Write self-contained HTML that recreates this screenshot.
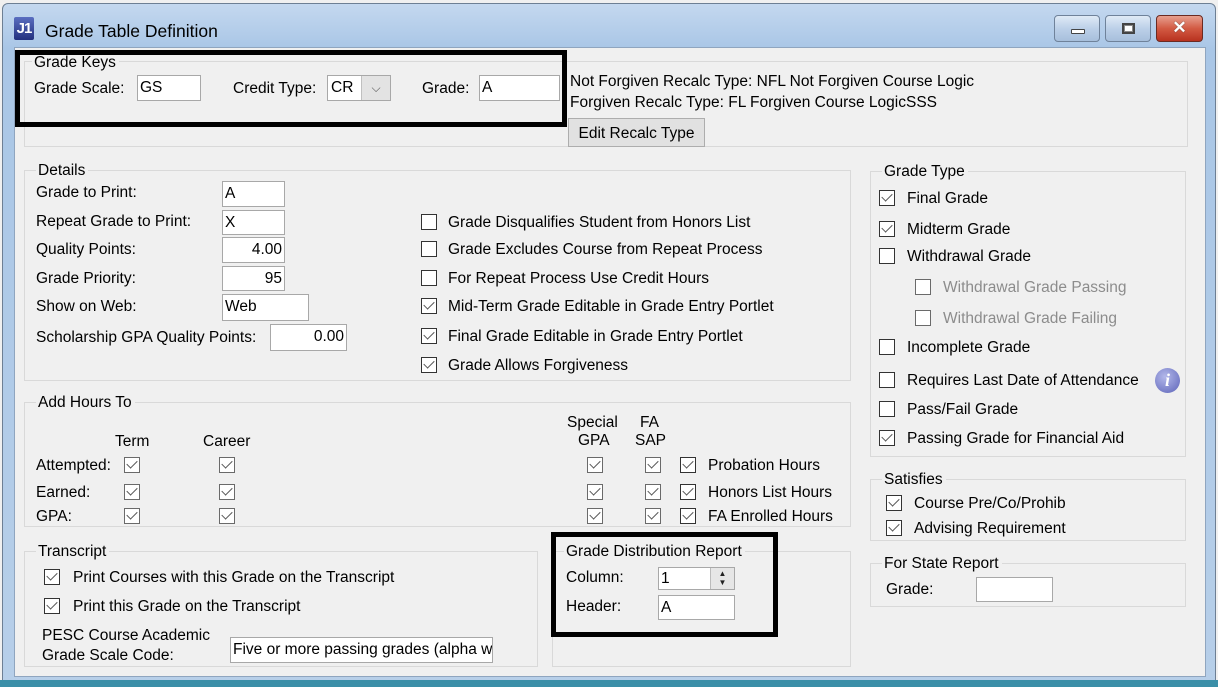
<!DOCTYPE html>
<html><head><meta charset="utf-8"><style>
*{box-sizing:border-box;margin:0;padding:0}
body{width:1218px;height:687px;overflow:hidden;background:#fff;font-family:"Liberation Sans",sans-serif;font-size:15.5px;color:#000;position:relative}
.a{position:absolute}
.t{position:absolute;line-height:16px;white-space:nowrap;margin-top:1px}
.g{position:absolute;border:1px solid #d9d9d9}
.lg{position:absolute;background:#f0f0f0;padding:0 3px 0 2px;line-height:16px;white-space:nowrap;margin-top:1px}
.in{position:absolute;background:#fff;border:1px solid #a8a8a8;line-height:24px;padding:0 2px;white-space:nowrap;overflow:hidden}
.r{text-align:right}
.cb{position:absolute;width:16px;height:16px;border:1.5px solid #333;background:#fff}
.cb.c::after{content:"";position:absolute;left:4px;top:0px;width:5px;height:9px;border:solid #555;border-width:0 1.6px 1.6px 0;transform:rotate(45deg)}
.gr{color:#8c8c8c}
.cb.d{border-color:#6a6a6a}
.bk{position:absolute;border:5px solid #000}
</style></head><body>
<div class="a" style="left:0;top:0;width:1218px;height:687px;background:#f0f0f0"></div>
<div class="a" style="left:2px;top:3px;width:1214px;height:684px;background:linear-gradient(#c4d8ef,#a9c6e6 45px,#b7cfe9);border:1px solid #6d7f94;border-radius:6px 6px 0 0"></div>
<div class="a" style="left:14px;top:47px;width:1192px;height:630px;background:#f0f0f0;border:1px solid #8fa5bf"></div>
<div class="a" style="left:0;top:680px;width:1218px;height:7px;background:#3b8fa8"></div>
<div class="a" style="left:14px;top:17px;width:20px;height:23px;background:linear-gradient(#5a6ec0,#23307e);border-radius:2px;color:#fff;font-weight:bold;font-size:15px;line-height:23px;text-align:center;letter-spacing:-1px">J1</div>
<div class="t" style="left:45px;top:21px;font-size:17.5px;line-height:18px">Grade Table Definition</div>
<div class="a" style="left:1054px;top:15px;width:46px;height:27px;border:1px solid #6f829a;border-radius:4px;background:linear-gradient(#dfeaf6,#bcd0e8 50%,#a7bfdc)"><div class="a" style="left:16px;top:13px;width:14px;height:5px;background:#fff;border:1px solid #444;border-radius:1px"></div></div>
<div class="a" style="left:1105px;top:15px;width:46px;height:27px;border:1px solid #6f829a;border-radius:4px;background:linear-gradient(#dfeaf6,#bcd0e8 50%,#a7bfdc)"><div class="a" style="left:16px;top:7px;width:13px;height:11px;border:2px solid #444;background:#fff;box-shadow:inset 0 0 0 1px #888"></div></div>
<div class="a" style="left:1156px;top:15px;width:47px;height:27px;border:1px solid #6b2a22;border-radius:4px;background:linear-gradient(#e8a08f,#d25a43 50%,#b8321f)"><div class="a" style="left:0;top:1px;width:45px;text-align:center;color:#fff;font-weight:bold;font-size:17px;line-height:22px;text-shadow:0 0 1px #333">✕</div></div>

<div class="g" style="left:24px;top:61px;width:1164px;height:86px"></div>
<div class="lg" style="left:32px;top:54px">Grade Keys</div>
<div class="t" style="left:34px;top:80px">Grade Scale:</div>
<div class="in" style="left:137px;top:75px;width:64px;height:26px">GS</div>
<div class="t" style="left:233px;top:80px">Credit Type:</div>
<div class="in" style="left:327px;top:75px;width:64px;height:26px;padding-left:3px">CR</div>
<div class="a" style="left:361px;top:76px;width:29px;height:24px;background:#e3e3e3;border-left:1px solid #c0c0c0;color:#555;text-align:center;line-height:24px;font-size:12px">&#x2335;</div>
<div class="t" style="left:422px;top:80px">Grade:</div>
<div class="in" style="left:479px;top:75px;width:81px;height:26px">A</div>
<div class="t" style="left:570px;top:73px">Not Forgiven Recalc Type: NFL Not Forgiven Course Logic</div>
<div class="t" style="left:570px;top:94px">Forgiven Recalc Type: FL Forgiven Course LogicSSS</div>
<div class="a" style="left:568px;top:118px;width:137px;height:29px;border:1px solid #adadad;background:#e1e1e1;text-align:center;line-height:29px">Edit Recalc Type</div>
<div class="bk" style="left:15px;top:50px;width:552px;height:77px"></div>

<div class="g" style="left:24px;top:170px;width:827px;height:211px"></div>
<div class="lg" style="left:36px;top:162px">Details</div>
<div class="t" style="left:36px;top:184px">Grade to Print:</div>
<div class="t" style="left:36px;top:213px">Repeat Grade to Print:</div>
<div class="t" style="left:36px;top:241px">Quality Points:</div>
<div class="t" style="left:36px;top:270px">Grade Priority:</div>
<div class="t" style="left:36px;top:298px">Show on Web:</div>
<div class="t" style="left:36px;top:329px">Scholarship GPA Quality Points:</div>
<div class="in" style="left:222px;top:181px;width:63px;height:26px">A</div>
<div class="in" style="left:222px;top:210px;width:63px;height:25px">X</div>
<div class="in r" style="left:222px;top:237px;width:63px;height:26px">4.00</div>
<div class="in r" style="left:222px;top:266px;width:63px;height:25px">95</div>
<div class="in" style="left:222px;top:294px;width:87px;height:27px">Web</div>
<div class="in r" style="left:270px;top:324px;width:77px;height:27px">0.00</div>
<div class="cb" style="left:421px;top:214px"></div><div class="t" style="left:448px;top:214px">Grade Disqualifies Student from Honors List</div>
<div class="cb" style="left:421px;top:241px"></div><div class="t" style="left:448px;top:241px">Grade Excludes Course from Repeat Process</div>
<div class="cb" style="left:421px;top:270px"></div><div class="t" style="left:448px;top:270px">For Repeat Process Use Credit Hours</div>
<div class="cb c" style="left:421px;top:298px"></div><div class="t" style="left:448px;top:298px">Mid-Term Grade Editable in Grade Entry Portlet</div>
<div class="cb c" style="left:421px;top:328px"></div><div class="t" style="left:448px;top:328px">Final Grade Editable in Grade Entry Portlet</div>
<div class="cb c" style="left:421px;top:357px"></div><div class="t" style="left:448px;top:357px">Grade Allows Forgiveness</div>

<div class="g" style="left:870px;top:171px;width:316px;height:286px"></div>
<div class="lg" style="left:882px;top:163px">Grade Type</div>
<div class="cb c" style="left:879px;top:190px"></div><div class="t" style="left:907px;top:190px">Final Grade</div>
<div class="cb c" style="left:879px;top:221px"></div><div class="t" style="left:907px;top:221px">Midterm Grade</div>
<div class="cb" style="left:879px;top:248px"></div><div class="t" style="left:907px;top:248px">Withdrawal Grade</div>
<div class="cb d" style="left:915px;top:279px"></div><div class="t gr" style="left:943px;top:279px">Withdrawal Grade Passing</div>
<div class="cb d" style="left:915px;top:310px"></div><div class="t gr" style="left:943px;top:310px">Withdrawal Grade Failing</div>
<div class="cb" style="left:879px;top:339px"></div><div class="t" style="left:907px;top:339px">Incomplete Grade</div>
<div class="cb" style="left:879px;top:372px"></div><div class="t" style="left:907px;top:372px">Requires Last Date of Attendance</div>
<div class="a" style="left:1155px;top:368px;width:25px;height:25px;border-radius:50%;background:radial-gradient(circle at 40% 35%,#b3b8ea,#5c63b8);color:#fff;font-weight:bold;font-style:italic;font-family:'Liberation Serif',serif;font-size:18px;line-height:25px;text-align:center">i</div>
<div class="cb" style="left:879px;top:401px"></div><div class="t" style="left:907px;top:401px">Pass/Fail Grade</div>
<div class="cb c" style="left:879px;top:430px"></div><div class="t" style="left:907px;top:430px">Passing Grade for Financial Aid</div>

<div class="g" style="left:24px;top:402px;width:827px;height:125px"></div>
<div class="lg" style="left:36px;top:394px">Add Hours To</div>
<div class="t" style="left:115px;top:433px">Term</div>
<div class="t" style="left:203px;top:433px">Career</div>
<div class="t" style="left:567px;top:414px">Special</div>
<div class="t" style="left:578px;top:432px">GPA</div>
<div class="t" style="left:640px;top:414px">FA</div>
<div class="t" style="left:635px;top:432px">SAP</div>
<div class="t" style="left:36px;top:457px">Attempted:</div>
<div class="t" style="left:36px;top:484px">Earned:</div>
<div class="t" style="left:36px;top:508px">GPA:</div>
<div class="cb c d" style="left:124px;top:457px"></div><div class="cb c d" style="left:219px;top:457px"></div><div class="cb c d" style="left:587px;top:457px"></div><div class="cb c d" style="left:645px;top:457px"></div><div class="cb c" style="left:680px;top:457px"></div>
<div class="cb c d" style="left:124px;top:484px"></div><div class="cb c d" style="left:219px;top:484px"></div><div class="cb c d" style="left:587px;top:484px"></div><div class="cb c d" style="left:645px;top:484px"></div><div class="cb c" style="left:680px;top:484px"></div>
<div class="cb c d" style="left:124px;top:508px"></div><div class="cb c d" style="left:219px;top:508px"></div><div class="cb c d" style="left:587px;top:508px"></div><div class="cb c d" style="left:645px;top:508px"></div><div class="cb c" style="left:680px;top:508px"></div>
<div class="t" style="left:708px;top:457px">Probation Hours</div>
<div class="t" style="left:708px;top:484px">Honors List Hours</div>
<div class="t" style="left:708px;top:508px">FA Enrolled Hours</div>

<div class="g" style="left:870px;top:479px;width:316px;height:62px"></div>
<div class="lg" style="left:882px;top:471px">Satisfies</div>
<div class="cb c" style="left:886px;top:495px"></div><div class="t" style="left:914px;top:495px">Course Pre/Co/Prohib</div>
<div class="cb c" style="left:886px;top:520px"></div><div class="t" style="left:914px;top:520px">Advising Requirement</div>

<div class="g" style="left:24px;top:551px;width:514px;height:116px"></div>
<div class="lg" style="left:36px;top:543px">Transcript</div>
<div class="cb c" style="left:44px;top:569px"></div><div class="t" style="left:73px;top:569px">Print Courses with this Grade on the Transcript</div>
<div class="cb c" style="left:44px;top:598px"></div><div class="t" style="left:73px;top:598px">Print this Grade on the Transcript</div>
<div class="t" style="left:42px;top:627px">PESC Course Academic</div>
<div class="t" style="left:42px;top:647px">Grade Scale Code:</div>
<div class="in" style="left:230px;top:637px;width:263px;height:26px">Five or more passing grades (alpha w</div>

<div class="g" style="left:552px;top:551px;width:299px;height:116px"></div>
<div class="lg" style="left:564px;top:543px">Grade Distribution Report</div>
<div class="t" style="left:566px;top:569px">Column:</div>
<div class="in" style="left:658px;top:567px;width:77px;height:23px;line-height:21px">1</div>
<div class="a" style="left:710px;top:568px;width:24px;height:21px;background:#e6e6e6;border-left:1px solid #bbb;font-size:8px;line-height:9px;text-align:center;color:#222;padding-top:1px">▲<br>▼</div>
<div class="t" style="left:566px;top:598px">Header:</div>
<div class="in" style="left:658px;top:595px;width:77px;height:25px">A</div>
<div class="bk" style="left:551px;top:532px;width:227px;height:105px"></div>

<div class="g" style="left:870px;top:563px;width:316px;height:44px"></div>
<div class="lg" style="left:882px;top:555px">For State Report</div>
<div class="t" style="left:886px;top:581px">Grade:</div>
<div class="in" style="left:976px;top:577px;width:77px;height:25px"></div>
</body></html>
